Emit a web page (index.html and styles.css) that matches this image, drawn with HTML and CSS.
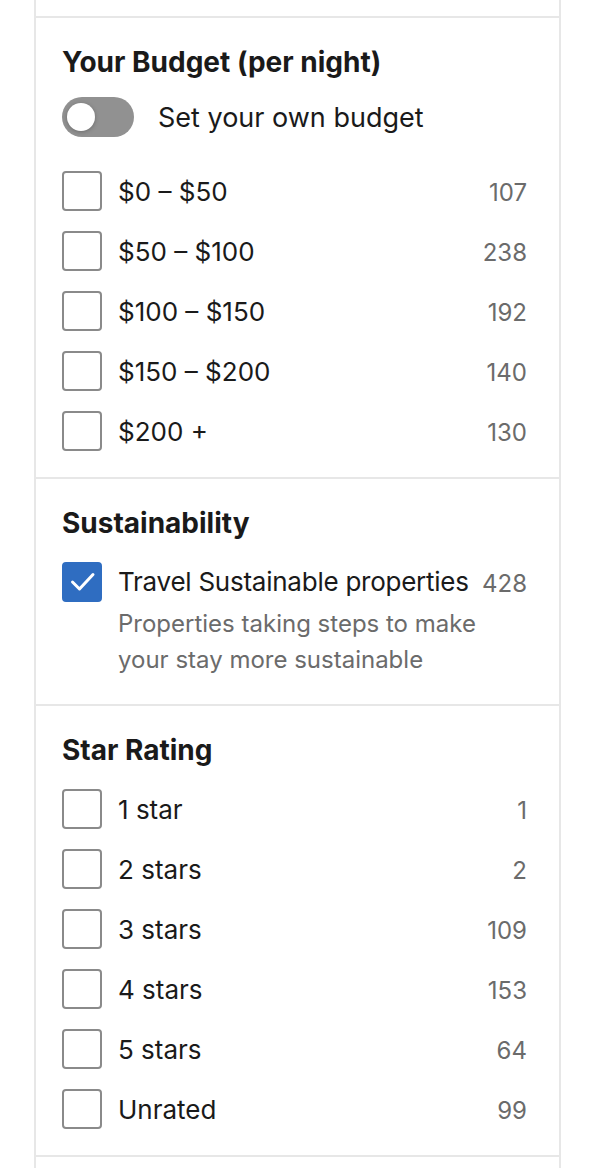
FILE: index.html
```html
<!DOCTYPE html>
<html lang="en">
<head>
<meta charset="utf-8">
<link rel="stylesheet" href="styles.css">
</head>
<body>
<div class="panel">
  <div class="prev"></div>

  <section class="section">
    <h2 class="title">Your Budget (per night)</h2>
    <div class="toggle-row">
      <span class="toggle"><span class="knob"></span></span>
      <span class="toggle-label">Set your own budget</span>
    </div>
    <ul class="options">
      <li class="option"><span class="box"></span><span class="label">$0 – $50</span><span class="count">107</span></li>
      <li class="option"><span class="box"></span><span class="label">$50 – $100</span><span class="count">238</span></li>
      <li class="option"><span class="box"></span><span class="label">$100 – $150</span><span class="count">192</span></li>
      <li class="option"><span class="box"></span><span class="label">$150 – $200</span><span class="count">140</span></li>
      <li class="option"><span class="box"></span><span class="label">$200 +</span><span class="count">130</span></li>
    </ul>
  </section>

  <section class="section">
    <h2 class="title">Sustainability</h2>
    <div class="option option-multi">
      <span class="box box-checked">
        <svg viewBox="0 0 40 40" width="40" height="40"><path d="M10.5 20 L17.5 27 L31 12.5" fill="none" stroke="#fff" stroke-width="3" stroke-linecap="round" stroke-linejoin="round"/></svg>
      </span>
      <span class="label-block">
        <span class="label">Travel Sustainable properties</span>
        <span class="sub">Properties taking steps to make your stay more sustainable</span>
      </span>
      <span class="count">428</span>
    </div>
  </section>

  <section class="section">
    <h2 class="title">Star Rating</h2>
    <ul class="options">
      <li class="option"><span class="box"></span><span class="label">1 star</span><span class="count">1</span></li>
      <li class="option"><span class="box"></span><span class="label">2 stars</span><span class="count">2</span></li>
      <li class="option"><span class="box"></span><span class="label">3 stars</span><span class="count">109</span></li>
      <li class="option"><span class="box"></span><span class="label">4 stars</span><span class="count">153</span></li>
      <li class="option"><span class="box"></span><span class="label">5 stars</span><span class="count">64</span></li>
      <li class="option"><span class="box"></span><span class="label">Unrated</span><span class="count">99</span></li>
    </ul>
  </section>

  <section class="section section-next"></section>
</div>
</body>
</html>
```

FILE: styles.css
```css
* { box-sizing: border-box; }

html, body {
  margin: 0;
  padding: 0;
  background: #ffffff;
}

body {
  font-family: Inter, "Noto Sans", "Liberation Sans", sans-serif;
  color: #1a1a1a;
  height: 1168px;
  overflow: hidden;
}

.panel {
  margin-left: 34px;
  width: 527px;
  border-left: 2px solid #e7e7e7;
  border-right: 2px solid #e7e7e7;
}

.prev {
  height: 16px;
}

.section {
  border-top: 2px solid #e7e7e7;
  padding: 28px 32px 26px 26px;
}

.section-next {
  height: 40px;
}

.title {
  margin: 0 0 23px;
  font-size: 28px;
  line-height: 32px;
  font-weight: 700;
  color: #1a1a1a;
}

.toggle-row {
  display: flex;
  align-items: center;
  gap: 24px;
  margin-top: -4px;
  margin-bottom: 34px;
  height: 40px;
}

.toggle {
  position: relative;
  width: 72px;
  height: 40px;
  border-radius: 20px;
  background: #919191;
  flex: none;
}

.knob {
  position: absolute;
  left: 5px;
  top: 6px;
  width: 28px;
  height: 28px;
  border-radius: 50%;
  background: #ffffff;
  box-shadow: 0 1px 4px rgba(0, 0, 0, 0.25);
}

.toggle-label {
  font-size: 27px;
  line-height: 32px;
  padding-top: 2px;
}

.options {
  list-style: none;
  margin: 0;
  padding: 0;
  display: flex;
  flex-direction: column;
  gap: 20px;
}

.option {
  display: flex;
  align-items: center;
  height: 40px;
}

.box {
  flex: none;
  width: 40px;
  height: 40px;
  border: 2px solid #8a8a8a;
  border-radius: 4px;
  margin-right: 16px;
  background: #fff;
}

.box-checked {
  background: #2f6dc1;
  border-color: #2f6dc1;
  display: flex;
  align-items: center;
  justify-content: center;
}

.box-checked svg {
  display: block;
  margin: -2px;
}

.label {
  flex: 1;
  font-size: 26px;
  line-height: 36px;
  padding-top: 2px;
  color: #1a1a1a;
}

.count {
  flex: none;
  font-size: 24px;
  line-height: 36px;
  padding-top: 4px;
  color: #6b6b6b;
  text-align: right;
}

.option-multi {
  height: auto;
  align-items: flex-start;
}

.option-multi .count {
  margin-top: 0;
}

.label-block {
  flex: 1;
  display: flex;
  flex-direction: column;
  padding-top: 2px;
  padding-right: 4px;
}

.label-block .label {
  flex: none;
  padding-top: 0;
  white-space: nowrap;
  letter-spacing: -0.25px;
}

.sub {
  font-size: 24px;
  line-height: 36px;
  color: #6b6b6b;
  margin-top: 6px;
}
```
